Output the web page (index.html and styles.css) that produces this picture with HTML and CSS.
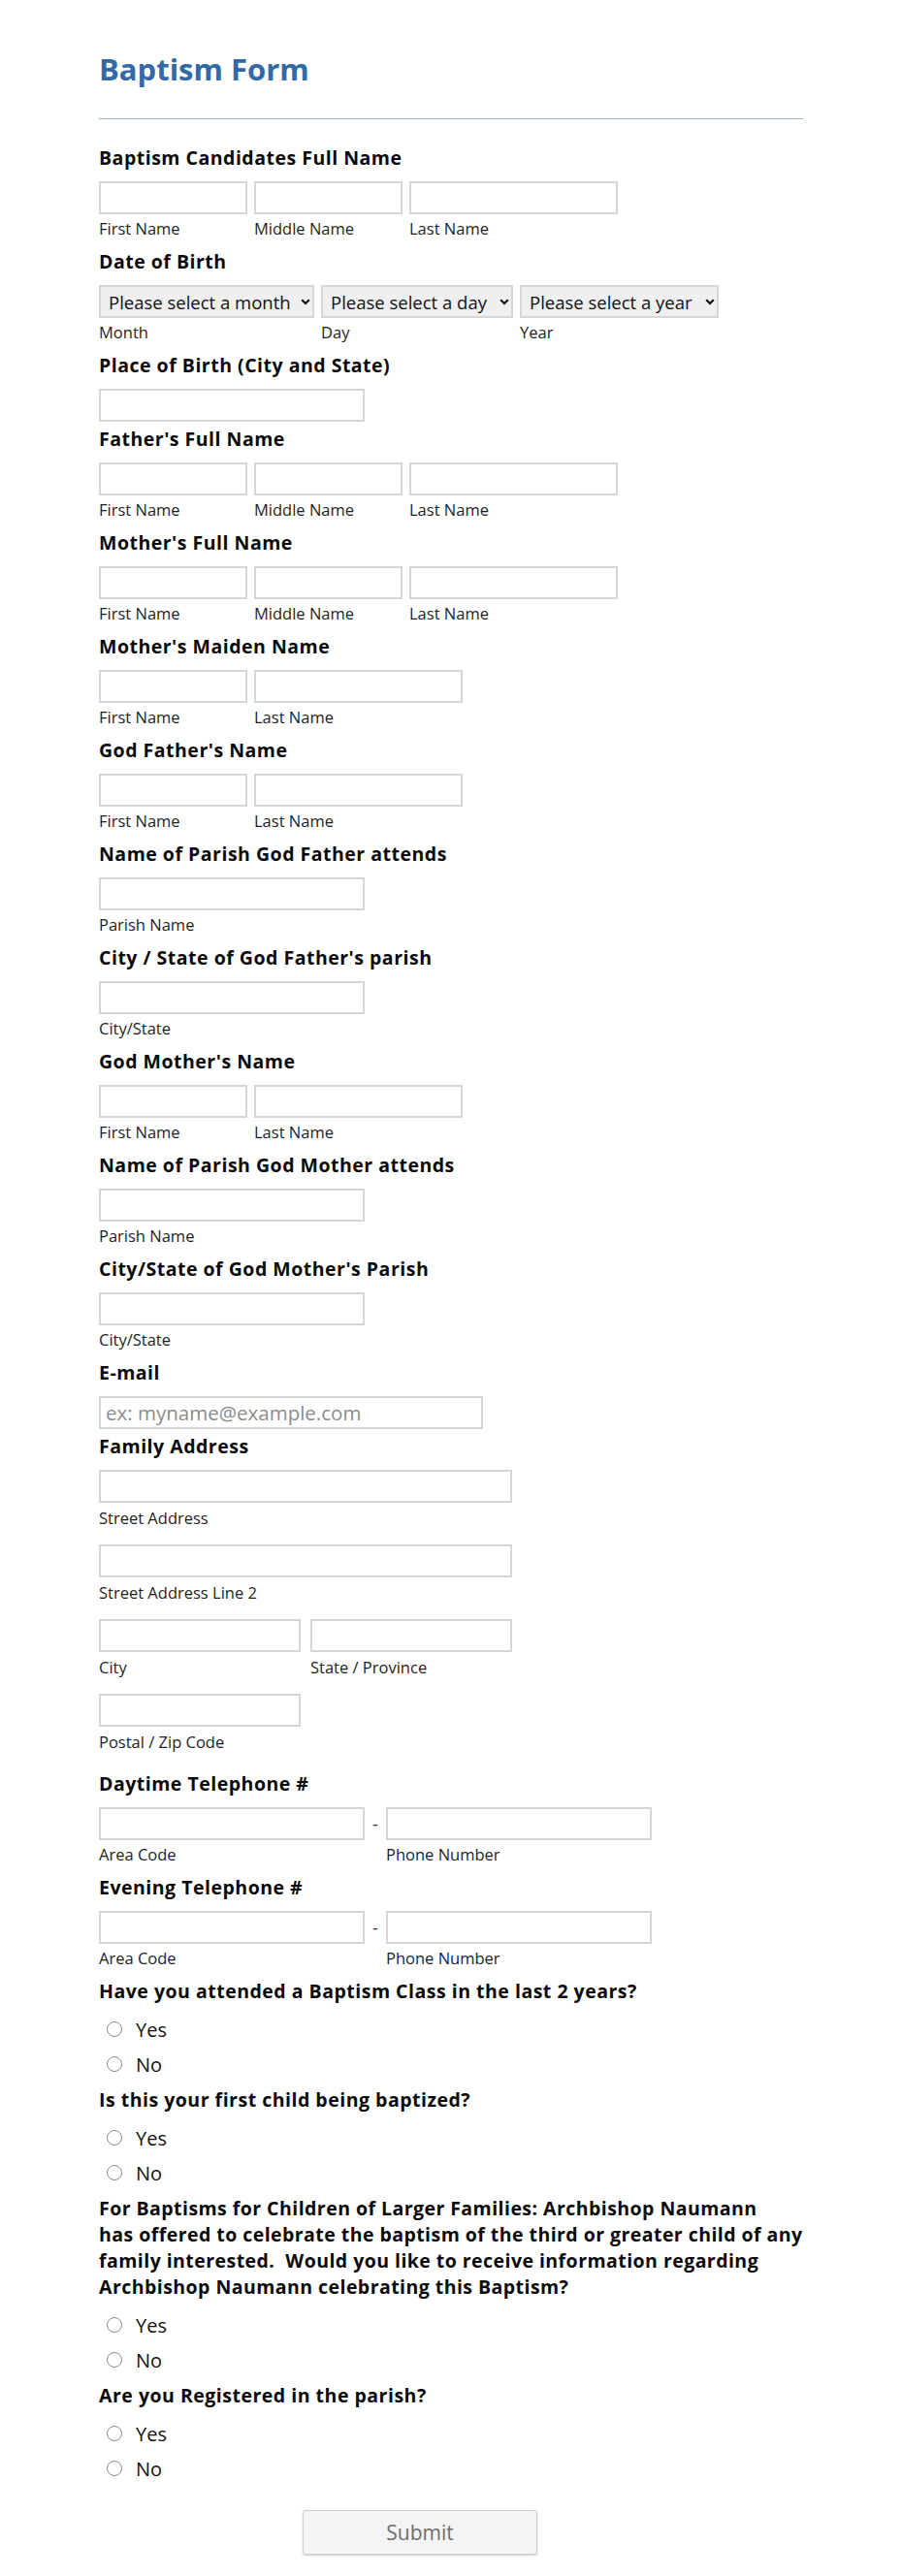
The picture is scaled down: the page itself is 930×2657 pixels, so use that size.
FILE: index.html
```html
<!DOCTYPE html>
<html lang="en">
<head>
<meta charset="utf-8">
<title>Baptism Form</title>
<link rel="stylesheet" href="styles.css">
</head>
<body>
<form class="form">
  <header class="header">
    <h1 class="title">Baptism Form</h1>
  </header>

  <div class="fields">
    <div class="field">
      <div class="label">Baptism Candidates Full Name</div>
      <div class="row">
        <div class="col"><input class="input w153" type="text"><span class="sub">First Name</span></div>
        <div class="col"><input class="input w153" type="text"><span class="sub">Middle Name</span></div>
        <div class="col"><input class="input w215" type="text"><span class="sub">Last Name</span></div>
      </div>
    </div>

    <div class="field">
      <div class="label">Date of Birth</div>
      <div class="row">
        <div class="col">
          <div class="select-wrap w222">
            <select class="select"><option>Please select a month</option></select>
            <svg class="chev" viewBox="0 0 10 7" width="10" height="7"><path d="M1.2 1.2l3.8 3.8 3.8-3.8" fill="none" stroke="#111" stroke-width="2.2"/></svg>
          </div>
          <span class="sub">Month</span>
        </div>
        <div class="col">
          <div class="select-wrap w198">
            <select class="select"><option>Please select a day</option></select>
            <svg class="chev" viewBox="0 0 10 7" width="10" height="7"><path d="M1.2 1.2l3.8 3.8 3.8-3.8" fill="none" stroke="#111" stroke-width="2.2"/></svg>
          </div>
          <span class="sub">Day</span>
        </div>
        <div class="col">
          <div class="select-wrap w205">
            <select class="select"><option>Please select a year</option></select>
            <svg class="chev" viewBox="0 0 10 7" width="10" height="7"><path d="M1.2 1.2l3.8 3.8 3.8-3.8" fill="none" stroke="#111" stroke-width="2.2"/></svg>
          </div>
          <span class="sub">Year</span>
        </div>
      </div>
    </div>

    <div class="field field-nosub">
      <div class="label">Place of Birth (City and State)</div>
      <input class="input w274" type="text">
    </div>

    <div class="field">
      <div class="label">Father's Full Name</div>
      <div class="row">
        <div class="col"><input class="input w153" type="text"><span class="sub">First Name</span></div>
        <div class="col"><input class="input w153" type="text"><span class="sub">Middle Name</span></div>
        <div class="col"><input class="input w215" type="text"><span class="sub">Last Name</span></div>
      </div>
    </div>

    <div class="field">
      <div class="label">Mother's Full Name</div>
      <div class="row">
        <div class="col"><input class="input w153" type="text"><span class="sub">First Name</span></div>
        <div class="col"><input class="input w153" type="text"><span class="sub">Middle Name</span></div>
        <div class="col"><input class="input w215" type="text"><span class="sub">Last Name</span></div>
      </div>
    </div>

    <div class="field">
      <div class="label">Mother's Maiden Name</div>
      <div class="row">
        <div class="col"><input class="input w153" type="text"><span class="sub">First Name</span></div>
        <div class="col"><input class="input w215" type="text"><span class="sub">Last Name</span></div>
      </div>
    </div>

    <div class="field">
      <div class="label">God Father's Name</div>
      <div class="row">
        <div class="col"><input class="input w153" type="text"><span class="sub">First Name</span></div>
        <div class="col"><input class="input w215" type="text"><span class="sub">Last Name</span></div>
      </div>
    </div>

    <div class="field">
      <div class="label">Name of Parish God Father attends</div>
      <div class="col"><input class="input w274" type="text"><span class="sub">Parish Name</span></div>
    </div>

    <div class="field">
      <div class="label">City / State of God Father's parish</div>
      <div class="col"><input class="input w274" type="text"><span class="sub">City/State</span></div>
    </div>

    <div class="field">
      <div class="label">God Mother's Name</div>
      <div class="row">
        <div class="col"><input class="input w153" type="text"><span class="sub">First Name</span></div>
        <div class="col"><input class="input w215" type="text"><span class="sub">Last Name</span></div>
      </div>
    </div>

    <div class="field">
      <div class="label">Name of Parish God Mother attends</div>
      <div class="col"><input class="input w274" type="text"><span class="sub">Parish Name</span></div>
    </div>

    <div class="field">
      <div class="label">City/State of God Mother's Parish</div>
      <div class="col"><input class="input w274" type="text"><span class="sub">City/State</span></div>
    </div>

    <div class="field field-nosub">
      <div class="label">E-mail</div>
      <input class="input w396 email" type="email" placeholder="ex: myname@example.com">
    </div>

    <div class="field field-address">
      <div class="label">Family Address</div>
      <div class="addr-row"><div class="col"><input class="input w426" type="text"><span class="sub">Street Address</span></div></div>
      <div class="addr-row"><div class="col"><input class="input w426" type="text"><span class="sub">Street Address Line 2</span></div></div>
      <div class="addr-row row-wide">
        <div class="col"><input class="input w208" type="text"><span class="sub">City</span></div>
        <div class="col"><input class="input w208" type="text"><span class="sub">State / Province</span></div>
      </div>
      <div class="addr-row"><div class="col"><input class="input w208" type="text"><span class="sub">Postal / Zip Code</span></div></div>
    </div>

    <div class="field">
      <div class="label">Daytime Telephone #</div>
      <div class="phone">
        <input class="input w274" type="tel">
        <span class="dash">-</span>
        <input class="input w274" type="tel">
        <span class="sub">Area Code</span>
        <span></span>
        <span class="sub">Phone Number</span>
      </div>
    </div>

    <div class="field">
      <div class="label">Evening Telephone #</div>
      <div class="phone">
        <input class="input w274" type="tel">
        <span class="dash">-</span>
        <input class="input w274" type="tel">
        <span class="sub">Area Code</span>
        <span></span>
        <span class="sub">Phone Number</span>
      </div>
    </div>

    <div class="field field-radio">
      <div class="label">Have you attended a Baptism Class in the last 2 years?</div>
      <div class="options">
        <label class="option"><input class="radio" type="radio" name="q1"><span>Yes</span></label>
        <label class="option"><input class="radio" type="radio" name="q1"><span>No</span></label>
      </div>
    </div>

    <div class="field field-radio">
      <div class="label">Is this your first child being baptized?</div>
      <div class="options">
        <label class="option"><input class="radio" type="radio" name="q2"><span>Yes</span></label>
        <label class="option"><input class="radio" type="radio" name="q2"><span>No</span></label>
      </div>
    </div>

    <div class="field field-radio">
      <div class="label label-long">For Baptisms for Children of Larger Families: Archbishop Naumann<br>has offered to celebrate the baptism of the third or greater child of any<br>family interested.&nbsp; Would you like to receive information regarding<br>Archbishop Naumann celebrating this Baptism?</div>
      <div class="options">
        <label class="option"><input class="radio" type="radio" name="q3"><span>Yes</span></label>
        <label class="option"><input class="radio" type="radio" name="q3"><span>No</span></label>
      </div>
    </div>

    <div class="field field-radio">
      <div class="label">Are you Registered in the parish?</div>
      <div class="options">
        <label class="option"><input class="radio" type="radio" name="q4"><span>Yes</span></label>
        <label class="option"><input class="radio" type="radio" name="q4"><span>No</span></label>
      </div>
    </div>

    <div class="actions">
      <button class="submit" type="button">Submit</button>
    </div>
  </div>
</form>
</body>
</html>
```

FILE: styles.css
```css
* { box-sizing: border-box; }

html, body {
  margin: 0;
  padding: 0;
  background: #ffffff;
}

body {
  font-family: "Open Sans", "Noto Sans", sans-serif;
  color: #111111;
}

.form {
  width: 726px;
  margin: 0 auto;
  padding-top: 51px;
  padding-bottom: 21px;
}

.header {
  padding-bottom: 31px;
  border-bottom: 1px solid #9fb3cf;
}

.title {
  margin: 0;
  font-size: 31px;
  line-height: 40px;
  font-weight: 700;
  color: #336aa5;
}

.fields {
  padding-top: 26px;
}

.field {
  display: flex;
  flex-direction: column;
  align-items: flex-start;
}

.label {
  font-size: 19.5px;
  letter-spacing: 0.5px;
  line-height: 27px;
  font-weight: 700;
  color: #0a0a0a;
  margin-bottom: 11px;
}

.label-long {
  white-space: nowrap;
  letter-spacing: 0.45px;
  margin-bottom: 8px;
}

.row {
  display: flex;
  gap: 7px;
}

.col {
  display: flex;
  flex-direction: column;
}

.input {
  height: 34px;
  border: 2px solid #d6d6d6;
  background: #ffffff;
  padding: 0 5px;
  font-family: inherit;
  font-size: 20.5px;
  color: #222;
  outline: none;
  border-radius: 0;
}

.input::placeholder {
  color: #8c8c8c;
}

.w153 { width: 153px; }
.w208 { width: 208px; }
.w215 { width: 215px; }
.w274 { width: 274px; }
.w396 { width: 396px; }
.w426 { width: 426px; }
.w198 { width: 198px; }
.w205 { width: 205px; }
.w222 { width: 222px; }

.sub {
  font-size: 16.5px;
  line-height: 18px;
  color: #1e1e1e;
  margin-top: 6px;
  margin-bottom: 11px;
  white-space: nowrap;
}

.field-nosub {
  padding-bottom: 4px;
}

.select-wrap {
  position: relative;
  height: 34px;
}

.select {
  -webkit-appearance: none;
  appearance: none;
  width: 100%;
  height: 34px;
  border: 2px solid #d6d6d6;
  background: #efefef;
  border-radius: 0;
  padding: 0 16px 0 8px;
  font-family: inherit;
  font-size: 18.5px;
  color: #111;
}

.chev {
  position: absolute;
  right: 4px;
  top: 14px;
  pointer-events: none;
}

.field-address {
  padding-bottom: 2px;
}

.addr-row .sub {
  margin-top: 7px;
  margin-bottom: 18px;
}

.row-wide {
  display: flex;
  gap: 10px;
}

.phone {
  display: grid;
  grid-template-columns: 274px 22px 274px;
  align-items: center;
}

.dash {
  text-align: center;
  font-size: 18px;
  line-height: 34px;
  color: #333;
}

.field-radio .label {
  margin-bottom: 8px;
}

.field-radio {
  padding-bottom: 5px;
}

.options {
  display: flex;
  flex-direction: column;
}

.option {
  display: flex;
  align-items: center;
  height: 36px;
  font-size: 20px;
  color: #111;
}

.radio {
  -webkit-appearance: none;
  appearance: none;
  width: 16px;
  height: 16px;
  margin: 0 14px 0 8px;
  border: 1px solid #8a8a8a;
  border-radius: 50%;
  background: #fff;
}

.actions {
  padding-top: 20px;
  padding-left: 210px;
}

.submit {
  width: 242px;
  height: 46px;
  background: #f4f4f4;
  border: 1px solid #cfcfcf;
  border-radius: 3px;
  box-shadow: 0 1px 2px rgba(0,0,0,0.2);
  font-family: inherit;
  font-size: 21px;
  color: #6e6e6e;
}
```
